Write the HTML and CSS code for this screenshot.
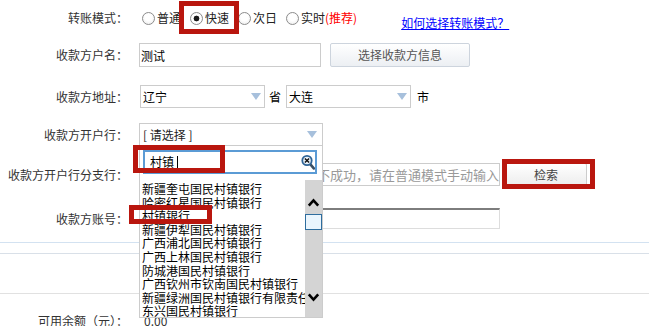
FILE: index.html
```html
<!DOCTYPE html>
<html lang="zh-CN">
<head>
    <meta charset="UTF-8">
    <meta name="viewport" content="width=device-width, initial-scale=1.0">
    <title>转账</title>
    <link rel="stylesheet" href="styles.css">
</head>
<body>
<div class="page">
    <div class="form">
        <div class="label">转账模式：</div>
        <div class="field">
            <label class="mode"><input type="radio" name="mode">普通</label>
            <label class="mode"><input type="radio" name="mode" checked>快速</label>
            <label class="mode"><input type="radio" name="mode">次日</label>
            <label class="mode"><input type="radio" name="mode">实时<span class="hot">(推荐)</span></label>
            <a class="help" href="#">如何选择转账模式？</a>
        </div>

        <div class="label">收款方户名：</div>
        <div class="field">
            <input class="text name" type="text" value="测试">
            <button class="btn pick">选择收款方信息</button>
        </div>

        <div class="label">收款方地址：</div>
        <div class="field">
            <div class="select"><span>辽宁</span><i class="arrow"></i></div>
            <span class="unit">省</span>
            <div class="select"><span>大连</span><i class="arrow"></i></div>
            <span class="unit">市</span>
        </div>

        <div class="label">收款方开户行：</div>
        <div class="field">
            <div class="combo">
                <span>[ 请选择 ]</span><i class="arrow"></i>
                <div class="panel">
                    <div class="search">
                        <span>村镇</span><i class="caret"></i>
                        <svg class="search-icon" width="14" height="16" viewBox="0 0 14 16">
                            <path d="M9.2 10.2l3.6 4.2" stroke="#3b4f63" stroke-width="2.6" stroke-linecap="round"/>
                            <circle cx="6" cy="6.5" r="4.7" fill="#e9f1f9" stroke="#2f6496" stroke-width="1.8"/>
                            <path d="M3.9 4.4l4.2 4.2M8.1 4.4l-4.2 4.2" stroke="#111" stroke-width="1.4"/>
                        </svg>
                    </div>
                    <div class="list">
                        <ul class="items">
                            <li>新疆奎屯国民村镇银行</li>
                            <li>哈密红星国民村镇银行</li>
                            <li>村镇银行</li>
                            <li>新疆伊犁国民村镇银行</li>
                            <li>广西浦北国民村镇银行</li>
                            <li>广西上林国民村镇银行</li>
                            <li>防城港国民村镇银行</li>
                            <li>广西钦州市钦南国民村镇银行</li>
                            <li>新疆绿洲国民村镇银行有限责任公司</li>
                            <li>东兴国民村镇银行</li>
                        </ul>
                        <div class="scrollbar">
                            <svg class="chevron up" width="13" height="9" viewBox="0 0 13 9">
                                <polyline points="1.8,7.6 6.5,2.4 11.2,7.6" fill="none" stroke="#000" stroke-width="2.6"/>
                            </svg>
                            <div class="thumb"></div>
                            <svg class="chevron down" width="13" height="9" viewBox="0 0 13 9">
                                <polyline points="1.8,1.4 6.5,6.6 11.2,1.4" fill="none" stroke="#000" stroke-width="2.6"/>
                            </svg>
                        </div>
                    </div>
                </div>
            </div>
        </div>

        <div class="label">收款方开户行分支行：</div>
        <div class="field">
            <div class="text branch"><span>请输入关键字检索，如果检索不成功，请在普通模式手动输入</span></div>
            <button class="btn find">检索</button>
        </div>

        <div class="label">收款方账号：</div>
        <div class="field">
            <div class="text account"></div>
        </div>
    </div>

    <div class="rule rule-a"></div>
    <div class="rule rule-b"></div>
    <div class="rule rule-c"></div>

    <div class="balance">
        <div class="label">可用余额（元）：</div>
        <div class="amount">0.00</div>
    </div>

    <!-- 标注框 -->
    <div class="mark mark-mode"></div>
    <div class="mark mark-search"></div>
    <div class="mark mark-item"></div>
    <div class="mark mark-find"></div>
</div>
</body>
</html>
```

FILE: styles.css
```css
html, body {
    height: 100%;
    overflow: hidden;
}

body {
    margin: 0;
    background-color: #fff;
    color: #333;
    font-family: "Noto Sans CJK SC", "Microsoft YaHei", sans-serif;
    font-size: 12px;
}

.page {
    position: relative;
    width: 649px;
    height: 326px;
}

.form {
    display: grid;
    grid-template-columns: 128px 1fr;
    grid-template-rows: 36px 38px 45px 31px 49px 39px;
    column-gap: 11px;
    align-items: center;
}

.label {
    text-align: right;
    line-height: 16px;
    white-space: nowrap;
}

.field {
    display: flex;
    align-items: center;
    line-height: 16px;
}

/* 转账模式 */
.mode {
    display: flex;
    align-items: center;
    margin-right: 9px;
    color: #222;
}

.mode:first-child {
    margin-left: 3px;
}

.mode:nth-child(4) {
    margin-right: 0;
}

.mode input {
    appearance: none;
    width: 13px;
    height: 13px;
    margin: 0 2px 0 0;
    border: 1px solid #8c8c8c;
    border-radius: 50%;
    background: radial-gradient(circle at 50% 40%, #fff 40%, #e8e8e8);
}

.mode input:checked {
    background: radial-gradient(circle, #1a1a1a 0 2.6px, #fff 3.2px 60%, #e8e8e8);
}

.hot {
    color: #f00;
}

.help {
    margin-left: 44px;
    padding-top: 9px;
    color: #0000ff;
}

/* 输入框 */
.text {
    box-sizing: border-box;
    border: 1px solid #ccc;
    background: #fff;
    font: inherit;
    color: #000;
}

.name {
    width: 182px;
    height: 24px;
    padding: 0 1px;
}

.btn {
    box-sizing: border-box;
    border: 1px solid #cdd4dd;
    border-radius: 2px;
    background: linear-gradient(#fff, #eceff3);
    font: inherit;
    color: #555;
    padding: 0;
}

.pick {
    width: 140px;
    height: 24px;
    margin-left: 9px;
}

.select {
    box-sizing: border-box;
    display: flex;
    align-items: center;
    width: 125px;
    height: 23px;
    padding-left: 2px;
    border: 1px solid #ccc;
    color: #000;
}

.select:first-child {
    margin-left: 1px;
}

.arrow {
    margin-left: auto;
    margin-right: 3px;
    width: 0;
    height: 0;
    border-left: 5px solid transparent;
    border-right: 5px solid transparent;
    border-top: 7px solid #a7c0dc;
}

.unit {
    margin: 0 5px 0 4px;
    color: #000;
}

.unit:last-child {
    margin-left: 6px;
}

/* 开户行下拉 */
.combo {
    position: relative;
    box-sizing: border-box;
    display: flex;
    align-items: center;
    width: 184px;
    height: 23px;
    padding-left: 3px;
    border: 1px solid #ccc;
    color: #222;
}

.combo > .arrow {
    margin-right: 5px;
}

.panel {
    position: absolute;
    left: -1px;
    top: calc(100% + 1px);
    z-index: 2;
    box-sizing: border-box;
    display: flex;
    flex-direction: column;
    width: 184px;
    height: 172px;
    border: 1px solid #ccc;
    border-top: none;
    background: #fff;
}

.search {
    box-sizing: border-box;
    display: flex;
    align-items: center;
    flex: none;
    height: 24px;
    margin: 4px 5px 0 3px;
    padding-left: 5px;
    border: 2px solid #5b9bd5;
    color: #000;
}

.caret {
    width: 1px;
    height: 13px;
    margin-left: 3px;
    background: #000;
}

.search-icon {
    margin-left: auto;
}

.list {
    display: flex;
    flex: 1;
    min-height: 0;
    margin-top: 6px;
}

.items {
    flex: 1;
    min-width: 0;
    margin: 0;
    padding: 2px 0 0 2px;
    list-style: none;
    overflow: hidden;
    line-height: 13.6px;
    color: #000;
}

.items li {
    white-space: nowrap;
}

.scrollbar {
    display: flex;
    flex-direction: column;
    align-items: center;
    flex: none;
    width: 17px;
    background: #d4d4d4;
}

.chevron.up {
    margin-top: 18px;
}

.thumb {
    box-sizing: border-box;
    width: 17px;
    height: 16px;
    margin-top: 7px;
    border: 1px solid #2e6d9e;
    background: #eaf5fd;
}

.chevron.down {
    margin-top: 63px;
}

/* 分支行 */
.branch {
    display: flex;
    justify-content: flex-end;
    align-items: center;
    width: 361px;
    height: 23px;
    overflow: hidden;
    white-space: nowrap;
    font-size: 13px;
    color: #999;
}

.branch span {
    flex: none;
}

.find {
    width: 82px;
    height: 23px;
    margin-left: 5px;
    border-color: #ccc;
    background: linear-gradient(#fff, #ededed);
    color: #444;
}

.account {
    width: 361px;
    height: 21px;
    border-color: #ddd;
    border-top: 2px solid #7d7d7d;
}

/* 分隔线 */
.rule {
    height: 1px;
}

.rule-a {
    margin-top: 4px;
    background: #d3e2f1;
}

.rule-b {
    margin-top: 10px;
    background: #d9e0e8;
}

.rule-c {
    margin-top: 39px;
    background: #e1e1e1;
}

.balance {
    display: grid;
    grid-template-columns: 128px 1fr;
    column-gap: 11px;
    margin-top: 19px;
    line-height: 16px;
}

.amount {
    margin-left: 5px;
}

/* 红色标注框 */
.mark {
    position: absolute;
    z-index: 5;
    box-sizing: border-box;
    border: 5px solid #b9160e;
}

.mark-mode {
    left: 179px;
    top: 1px;
    width: 60px;
    height: 33px;
}

.mark-search {
    left: 133px;
    top: 145px;
    width: 92px;
    height: 28px;
}

.mark-item {
    left: 129px;
    top: 205px;
    width: 83px;
    height: 19px;
}

.mark-find {
    left: 502px;
    top: 159px;
    width: 93px;
    height: 30px;
}
```
